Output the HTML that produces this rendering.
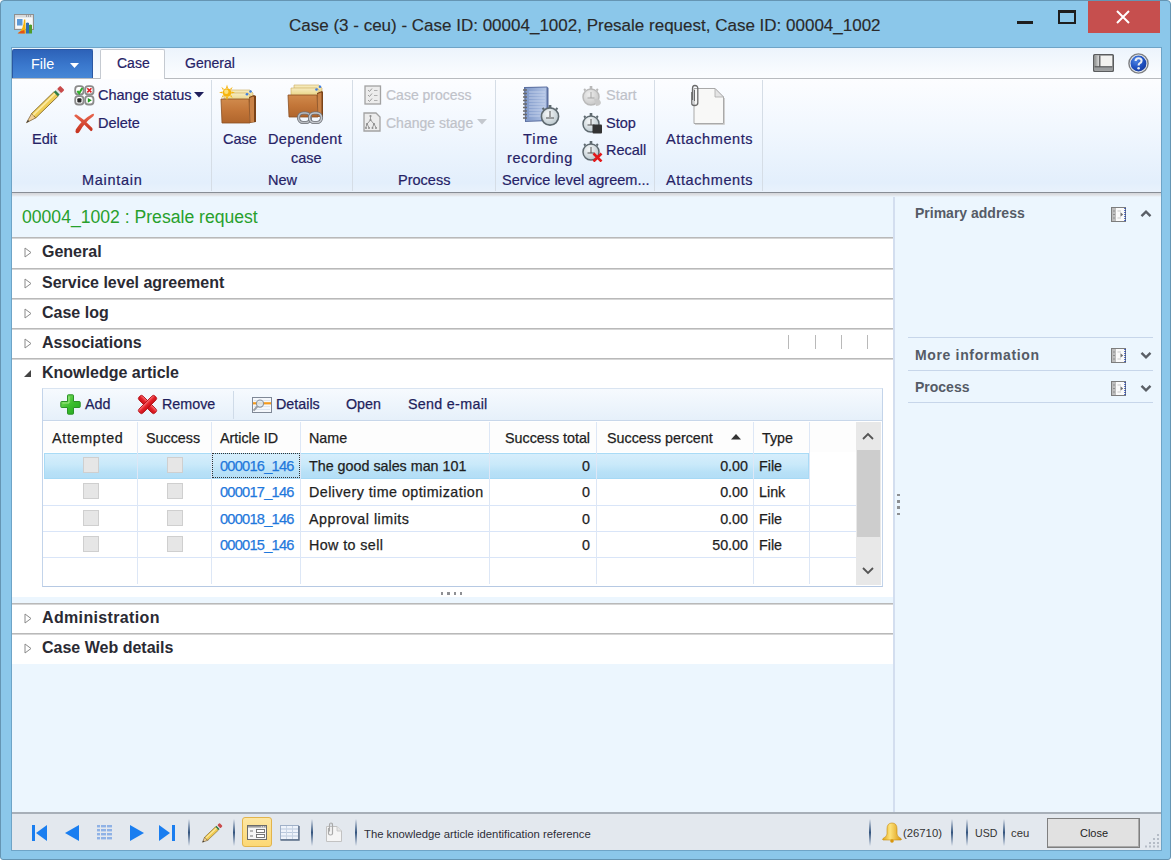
<!DOCTYPE html>
<html><head><meta charset="utf-8">
<style>
*{box-sizing:border-box;margin:0;padding:0}
html,body{width:1171px;height:860px;overflow:hidden;background:#fff}
body{font-family:"Liberation Sans",sans-serif;position:relative}
.a{position:absolute;white-space:nowrap}
#win{position:absolute;left:0;top:0;width:1171px;height:860px;background:#8bc7ea;border:1px solid #6595b3;border-radius:4px 4px 3px 3px}
.rib{position:absolute;white-space:nowrap;color:#262266;font-size:14.5px;line-height:17px;-webkit-text-stroke:.2px currentColor}
.dis{color:#bfc2c9}
.gl{position:absolute;top:80px;width:1px;height:111px;background:#d5dde6}
.sec{position:absolute;left:12px;width:881px;background:#fff;border-top:1px solid #b9b9b9;box-shadow:inset 0 1px #d6d6d6}
.sec .t{position:absolute;left:30px;top:4px;font-weight:bold;font-size:16px;line-height:19px;color:#2a2a33;white-space:nowrap}
.tri{position:absolute;left:12px;top:9px}
.gt{position:absolute;white-space:nowrap;font-size:14.3px;line-height:17px;color:#1e1e1e;-webkit-text-stroke:.25px currentColor}
.vl{position:absolute;top:422px;width:1px;height:162px;background:#dde7f6}
.hl{position:absolute;left:43px;width:813px;height:1px;background:#d9e5f8}
.cb{position:absolute;width:16px;height:16px;background:#e6e6e6;border:1px solid #cfcfcf}
.fb{position:absolute;white-space:nowrap;font-weight:bold;font-size:14px;line-height:17px;color:#555b66}
.sep{position:absolute;top:819px;width:2px;height:27px;background:linear-gradient(#e2e7ee,#34557f 50%,#e2e7ee)}
</style></head><body>
<div id="win"></div>
<!-- title bar -->
<svg class="a" style="left:14px;top:14px" width="20" height="20" viewBox="0 0 20 20">
 <rect x=".5" y=".5" width="19" height="15" fill="#d9dadb" stroke="#8f8f8f"/>
 <rect x="1.5" y="3.5" width="17" height="11" fill="#f7f8f9"/>
 <path d="M12 2 H13 M14 2 H15 M16 2 H17" stroke="#6d6f73"/>
 <rect x="3" y="5" width="5.5" height="6.5" fill="#5d9ad8"/>
 <path d="M4 19 Q9.5 16 10 5.5 L11.3 5.5 L11.8 19.5Z" fill="#f6b50e"/>
 <path d="M3.5 19.5 Q6 16.8 10.3 16 L10.8 19.5Z" fill="#e0531d"/>
 <path d="M12 19.5 V9 Q13.5 8 15 9 V19.5Z" fill="#2e6fb5"/>
 <path d="M15 19.5 V11 Q16.5 10 18 11 V19.5Z" fill="#4f9c2a"/>
</svg>
<div class="a" style="left:289px;top:16px;font-size:17px;line-height:20px;color:#2a2a2a;-webkit-text-stroke:.15px currentColor">Case (3 - ceu) - Case ID: 00004_1002, Presale request, Case ID: 00004_1002</div>
<div class="a" style="left:1017px;top:21px;width:16px;height:3px;background:#1e1e1e"></div>
<div class="a" style="left:1058px;top:10px;width:18px;height:14px;border:2px solid #1e1e1e;border-top-width:3px"></div>
<div class="a" style="left:1088px;top:1px;width:72px;height:32px;background:#c64f4e"></div>
<svg class="a" style="left:1115px;top:10px" width="16" height="14" viewBox="0 0 16 14"><path d="M2 1 L14 13 M14 1 L2 13" stroke="#fff" stroke-width="2"/></svg>

<!-- client -->
<div class="a" style="left:12px;top:48px;width:1149px;height:802px;background:#ecf6fe"></div>
<!-- tab row -->
<div class="a" style="left:11px;top:47px;width:1151px;height:804px;border:1px solid #6ea4c7"></div>
<div class="a" style="left:12px;top:48px;width:1149px;height:31px;background:linear-gradient(#ecf4fc,#fbfdff);border-bottom:1px solid #b8bbbf"></div>
<div class="a" style="left:12px;top:49px;width:81px;height:29px;background:linear-gradient(#2d62b8,#3a78cd 55%,#4787d6);border:1px solid #2a58a3;border-bottom:none;border-radius:2px 2px 0 0"></div>
<div class="a" style="left:31px;top:55.5px;font-size:14.4px;line-height:17px;color:#fff">File</div>
<svg class="a" style="left:69.5px;top:63px" width="9" height="6"><path d="M0 0 L9 0 L4.5 5Z" fill="#fff"/></svg>
<div class="a" style="left:100px;top:49px;width:65px;height:31px;background:#fff;border:1px solid #c5cad1;border-bottom:none;border-radius:2px 2px 0 0"></div>
<div class="rib" style="left:117px;top:55px;font-size:14px">Case</div>
<div class="rib" style="left:185px;top:55px;font-size:14px">General</div>
<!-- top-right icons -->
<svg class="a" style="left:1093px;top:54px" width="21" height="18" viewBox="0 0 21 18">
 <defs><linearGradient id="lc" x1="0" y1="0" x2="1" y2="0"><stop offset="0" stop-color="#8e9190"/><stop offset="1" stop-color="#dcdcdc"/></linearGradient></defs>
 <rect x=".8" y=".8" width="19.4" height="16.4" rx=".8" fill="#f2f2f0" stroke="#5a5c5e" stroke-width="1.6"/>
 <rect x="1.6" y="1.6" width="4.6" height="11.5" fill="url(#lc)"/>
 <path d="M6.8 1.6 V13" stroke="#4a4c4e" stroke-width="1.2"/>
 <rect x="1.6" y="12.6" width="17.8" height="4" fill="#9a9d9f"/>
 <path d="M1.6 12.8 H19.4" stroke="#4a4c4e" stroke-width="1"/>
</svg>
<svg class="a" style="left:1128px;top:53px" width="21" height="21" viewBox="0 0 21 21">
 <defs><radialGradient id="hq" cx=".35" cy=".3" r=".8"><stop offset="0" stop-color="#4f86e6"/><stop offset=".6" stop-color="#1d4fbf"/><stop offset="1" stop-color="#17399a"/></radialGradient></defs>
 <circle cx="10.5" cy="10.5" r="9.6" fill="#e8ecf0" stroke="#7d7f82" stroke-width="1.4"/>
 <circle cx="10.5" cy="10.5" r="7.9" fill="url(#hq)"/>
 <path d="M7.6 8 Q7.6 5.2 10.6 5.2 Q13.6 5.2 13.6 7.8 Q13.6 9.5 11.6 10.4 Q10.6 11 10.6 12.6" stroke="#e9edf3" stroke-width="2.1" fill="none"/>
 <circle cx="10.6" cy="15.3" r="1.3" fill="#e9edf3"/>
</svg>

<!-- ribbon body -->
<div class="a" style="left:12px;top:79px;width:1149px;height:114px;background:linear-gradient(#fcfdff,#f1f7fe 45%,#e3effc 92%,#e9f2fc);border-bottom:1px solid #878d95"></div>
<div class="a" style="left:12px;top:193px;width:1149px;height:4px;background:linear-gradient(#d3d5d9,#dfe1e5 50%,#ecf6fe)"></div>
<div class="gl" style="left:211px"></div>
<div class="gl" style="left:352px"></div>
<div class="gl" style="left:495px"></div>
<div class="gl" style="left:654px"></div>
<div class="gl" style="left:762px"></div>

<!-- Maintain -->
<svg class="a" style="left:24px;top:84px" width="42" height="42" viewBox="0 0 42 42">
 <g transform="translate(2.5,38.7) rotate(-44.2)">
  <path d="M0 0 L10 -3 L10 3Z" fill="#f1cf95" stroke="#7a5f36" stroke-width=".7"/>
  <path d="M0 0 L3 -.9 L3 .9Z" fill="#333"/>
  <rect x="10" y="-3" width="31" height="6" fill="#efcd55" stroke="#7d6428" stroke-width=".8"/>
  <rect x="10" y="-1.8" width="31" height="1.8" fill="#fbe9a0"/>
  <rect x="41" y="-3" width="2.5" height="6" fill="#2e7d44"/>
  <rect x="43.5" y="-3" width="2" height="6" fill="#e2e2e2"/>
  <rect x="45.5" y="-3" width="4.5" height="6" rx="1" fill="#c94b4b"/>
 </g>
</svg>
<div class="rib" style="left:32px;top:131px">Edit</div>
<svg class="a" style="left:74px;top:85px" width="21" height="21" viewBox="0 0 21 21">
 <g fill="#fff" stroke="#8b8b8b" stroke-width="1.8">
 <rect x="1.2" y="1.2" width="8.3" height="8.3" rx="3"/>
 <rect x="11.2" y="1.2" width="8.3" height="8.3" rx="3"/>
 <rect x="1.2" y="11.2" width="8.3" height="8.3" rx="3"/>
 <rect x="11.2" y="11.2" width="8.3" height="8.3" rx="3"/>
 </g>
 <path d="M3.3 6 L5.2 8.2 L8.3 3" stroke="#2fae2a" stroke-width="2" fill="none"/>
 <path d="M13.3 3.3 L17.4 7.4 M17.4 3.3 L13.3 7.4" stroke="#e01d22" stroke-width="1.6"/>
 <rect x="3.3" y="13.3" width="4.2" height="4.2" rx="1" fill="#2b2b2b"/>
 <path d="M13.8 13 L17.8 15.3 L13.8 17.8Z" fill="#1f9a1f"/>
</svg>
<div class="rib" style="left:98px;top:87px">Change status</div>
<svg class="a" style="left:194px;top:92px" width="10" height="6"><path d="M0 0 L10 0 L5 5.5Z" fill="#1f1f5c"/></svg>
<svg class="a" style="left:74px;top:113px" width="21" height="21" viewBox="0 0 21 21">
 <defs><linearGradient id="dx" x1="0" y1="0" x2="0" y2="1"><stop offset="0" stop-color="#e8664e"/><stop offset="1" stop-color="#c4301d"/></linearGradient></defs>
 <path d="M0.3 3 Q0.5 1 2.5 1.6 Q10.5 6.5 18.3 15 Q19.3 17.6 17 18.2 Q9.5 10.5 0.3 3Z" fill="url(#dx)"/>
 <path d="M19.6 0.8 Q20.8 1.8 19.3 3.2 Q10.5 9.5 6 18 Q4.8 20.6 2.6 20.2 Q0.8 19.2 1.8 16.6 Q7.5 7 17.8 1.2 Q18.8 0.5 19.6 0.8Z" fill="url(#dx)"/>
</svg>
<div class="rib" style="left:98px;top:115px">Delete</div>
<div class="rib" style="left:82px;top:172px;letter-spacing:.7px">Maintain</div>

<!-- New -->
<svg class="a" style="left:219px;top:84px" width="40" height="42" viewBox="0 0 40 42">
 <defs>
  <linearGradient id="fr" x1="0" y1="0" x2="0" y2="1"><stop offset="0" stop-color="#d08a4c"/><stop offset=".5" stop-color="#c27538"/><stop offset="1" stop-color="#b0652c"/></linearGradient>
  <linearGradient id="pp" x1="0" y1="0" x2="0" y2="1"><stop offset="0" stop-color="#f7ecc0"/><stop offset="1" stop-color="#e6cf7a"/></linearGradient>
 </defs>
 <path d="M8 6 L31 6 L34 9 L34 17 L8 17Z" fill="url(#pp)" stroke="#c9a85a" stroke-width=".6"/>
 <path d="M5 9 L29 9 L31 11 L31 18 L5 18Z" fill="url(#pp)" stroke="#c9a85a" stroke-width=".6"/>
 <circle cx="31.5" cy="7.5" r="1.3" fill="#3f7fe0"/>
 <circle cx="28" cy="10.3" r="1.3" fill="#3f7fe0"/>
 <path d="M30 13 L35 11 L37 12 L37 38 L31 39Z" fill="#7a4318"/>
 <path d="M30.5 14 L34 12.5 L35 13 L35 38 L31 38.5Z" fill="#c98247"/>
 <path d="M2 15 L30 15 L31 39 L3 39Z" fill="url(#fr)" stroke="#8a4f22" stroke-width=".8"/>
 <g fill="#f6b40e"><circle cx="8" cy="8.5" r="4.3"/>
 <path d="M8 0.5 L9 4 L7 4Z M8 16.5 L9 13 L7 13Z M0 8.5 L3.5 7.5 L3.5 9.5Z M16 8.5 L12.5 7.5 L12.5 9.5Z M2.3 2.8 L5 5 L3.9 6 Z M13.7 2.8 L11 5 L12.1 6Z M2.3 14.2 L5 12 L3.9 11Z M13.7 14.2 L11 12 L12.1 11Z"/></g>
 <circle cx="7.3" cy="7.8" r="2.2" fill="#fde07a"/>
</svg>
<div class="rib" style="left:223px;top:131px">Case</div>
<svg class="a" style="left:286px;top:82px" width="40" height="44" viewBox="0 0 40 44">
 <path d="M8 3 L33 3 L36 6 L36 14 L8 14Z" fill="url(#pp)" stroke="#c9a85a" stroke-width=".6"/>
 <path d="M5 6 L31 6 L33 8 L33 15 L5 15Z" fill="url(#pp)" stroke="#c9a85a" stroke-width=".6"/>
 <circle cx="34" cy="4.8" r="1.3" fill="#3f7fe0"/>
 <circle cx="30.5" cy="7.5" r="1.3" fill="#3f7fe0"/>
 <path d="M31 11 L36 9 L37 10 L37 35 L32 35Z" fill="#7a4318"/>
 <path d="M31.5 12 L35 10.5 L35.5 11 L35.5 34.5 L32 34.5Z" fill="#c98247"/>
 <path d="M2 13 L31 13 L32 35 L3 35Z" fill="url(#fr)" stroke="#8a4f22" stroke-width=".8"/>
 <rect x="12.5" y="31" width="12" height="9.5" rx="4.7" fill="none" stroke="#6f7278" stroke-width="3.2"/>
 <rect x="12.5" y="31" width="12" height="9.5" rx="4.7" fill="none" stroke="#b8bbc0" stroke-width="1.6"/>
 <rect x="23.5" y="31" width="12" height="9.5" rx="4.7" fill="none" stroke="#6f7278" stroke-width="3.2"/>
 <rect x="23.5" y="31" width="12" height="9.5" rx="4.7" fill="none" stroke="#c4c7cc" stroke-width="1.6"/>
</svg>
<div class="rib" style="left:268px;top:131px;letter-spacing:.35px">Dependent</div>
<div class="rib" style="left:291px;top:150px">case</div>
<div class="rib" style="left:268px;top:172px">New</div>

<!-- Process -->
<svg class="a" style="left:364px;top:85px" width="18" height="20" viewBox="0 0 18 20">
 <rect x="1" y="1" width="15.5" height="18" fill="#ececec" stroke="#a2a2a2" stroke-width="1.3"/>
 <path d="M4 5 L5.5 6.5 L8 3.5 M4 10 L5.5 11.5 L8 8.5 M4 15 L5.5 16.5 L8 13.5" stroke="#9c9c9c" stroke-width="1" fill="none"/>
 <path d="M10 5.5 H13.5 M10 10.5 H13.5 M10 15.5 H13.5" stroke="#b0b0b0" stroke-width="1.2"/>
</svg>
<div class="rib dis" style="left:386px;top:87px;font-size:14px">Case process</div>
<svg class="a" style="left:363px;top:112px" width="19" height="20" viewBox="0 0 19 20">
 <path d="M1 1 H13 L17 5 V19 H1Z" fill="#ececec" stroke="#a2a2a2" stroke-width="1.3"/>
 <path d="M7.5 4 V8 M7.5 8 L4 12 M7.5 8 L11 12 M4 12 L2.8 15.5 M4 12 L6 15.5 M11 12 L9.5 15.5 M11 12 L13 15.5" stroke="#8e8e8e" stroke-width=".9" fill="none"/>
 <g fill="#8e8e8e"><circle cx="7.5" cy="4" r="1.1"/><circle cx="7.5" cy="8" r="1.1"/><circle cx="4" cy="12" r="1.1"/><circle cx="11" cy="12" r="1.1"/><circle cx="3" cy="16" r="1"/><circle cx="6" cy="16" r="1"/><circle cx="9.5" cy="16" r="1"/><circle cx="13" cy="16" r="1"/></g>
</svg>
<div class="rib dis" style="left:386px;top:115px;font-size:14px">Change stage</div>
<svg class="a" style="left:477px;top:119px" width="10" height="6"><path d="M0 0 L10 0 L5 5.5Z" fill="#c4c8ce"/></svg>
<div class="rib" style="left:398px;top:172px">Process</div>

<!-- SLA -->
<svg class="a" style="left:520px;top:84px" width="42" height="44" viewBox="0 0 42 44">
 <defs><linearGradient id="nb" x1="0" y1="0" x2="1" y2="0"><stop offset="0" stop-color="#7f98c8"/><stop offset="1" stop-color="#b3c5e6"/></linearGradient>
 <radialGradient id="sw" cx=".4" cy=".35" r=".7"><stop offset="0" stop-color="#f6f8f9"/><stop offset="1" stop-color="#b9c6cc"/></radialGradient></defs>
 <path d="M4 3 L27 2.5 L28.5 4 L28.5 37 L5 38Z" fill="#5b6fa0"/>
 <path d="M5.5 4 L26.5 3.5 L26.5 36 L6 37Z" fill="url(#nb)"/>
 <path d="M9 8 H25 M9 11 H25 M9 14 H25 M9 17 H25 M9 20 H25 M9 23 H25 M9 26 H25 M9 29 H25 M9 32 H25" stroke="#d2ddf0" stroke-width=".7"/>
 <path d="M3 6 H7 M3 9.5 H7 M3 13 H7 M3 16.5 H7 M3 20 H7 M3 23.5 H7 M3 27 H7 M3 30.5 H7 M3 34 H7" stroke="#6b6b6b" stroke-width="1.4"/>
 <circle cx="30" cy="32.5" r="8.6" fill="url(#sw)" stroke="#5f6a70" stroke-width="1.6"/>
 <rect x="28.6" y="21" width="2.8" height="3" fill="#5f6a70"/>
 <path d="M22.5 25.5 L24 24 M37.5 25.5 L36 24" stroke="#5f6a70" stroke-width="2"/>
 <path d="M30 27 V33 M26 34 H34" stroke="#555" stroke-width="1"/>
</svg>
<div class="rib" style="left:523px;top:131px;letter-spacing:1px">Time</div>
<div class="rib" style="left:507px;top:150px;letter-spacing:.6px">recording</div>
<svg class="a" style="left:581px;top:85px" width="22" height="22" viewBox="0 0 22 22">
 <circle cx="10" cy="12" r="8" fill="url(#swg)" stroke="#b9b9b9" stroke-width="1.5"/>
 <rect x="8.7" y="1" width="2.6" height="3" fill="#b9b9b9"/>
 <path d="M3 5.5 L4.5 4 M17 5.5 L15.5 4" stroke="#b9b9b9" stroke-width="1.8"/>
 <path d="M10 7 V13 M6.5 13 H13.5" stroke="#a5a5a5" stroke-width="1"/>
 <defs><radialGradient id="swg" cx=".4" cy=".35" r=".7"><stop offset="0" stop-color="#eeeeee"/><stop offset="1" stop-color="#c6c6c6"/></radialGradient></defs><path d="M13 14 Q19 13 20 18 Q19 21 15 21Z" fill="#c9c9c9"/>
</svg>
<div class="rib dis" style="left:606px;top:87px">Start</div>
<svg class="a" style="left:581px;top:112px" width="22" height="22" viewBox="0 0 22 22">
 <circle cx="10" cy="12" r="8" fill="url(#sw)" stroke="#5f6a70" stroke-width="1.5"/>
 <rect x="8.7" y="1" width="2.6" height="3" fill="#5f6a70"/>
 <path d="M3 5.5 L4.5 4 M17 5.5 L15.5 4" stroke="#5f6a70" stroke-width="1.8"/>
 <path d="M10 7 V13 M6.5 13 H13.5" stroke="#555" stroke-width="1"/>
 <rect x="11.5" y="12.5" width="9.5" height="9" rx="1" fill="#333"/>
</svg>
<div class="rib" style="left:606px;top:115px">Stop</div>
<svg class="a" style="left:581px;top:140px" width="22" height="22" viewBox="0 0 22 22">
 <circle cx="10" cy="12" r="8" fill="url(#sw)" stroke="#5f6a70" stroke-width="1.5"/>
 <rect x="8.7" y="1" width="2.6" height="3" fill="#5f6a70"/>
 <path d="M3 5.5 L4.5 4 M17 5.5 L15.5 4" stroke="#5f6a70" stroke-width="1.8"/>
 <path d="M10 7 V13 M6.5 13 H13.5" stroke="#555" stroke-width="1"/>
 <path d="M12.5 13.5 L20.5 21.5 M20.5 13.5 L12.5 21.5" stroke="#e3191b" stroke-width="2.6"/>
</svg>
<div class="rib" style="left:606px;top:142px">Recall</div>
<div class="rib" style="left:502px;top:172px">Service level agreem...</div>

<!-- Attachments -->
<svg class="a" style="left:688px;top:84px" width="40" height="42" viewBox="0 0 40 42">
 <path d="M6 4.5 L27 4.5 L35.5 13 L35.5 39.5 L6 39.5Z" fill="#f8f8f7" stroke="#a9a9a9" stroke-width="1"/>
 <path d="M36.5 14 V40.5 H7" stroke="#d0d0d0" stroke-width="1" fill="none"/>
 <path d="M27 4.5 L27 13 L35.5 13Z" fill="#e4e4e4" stroke="#a9a9a9" stroke-width=".8"/>
 <path d="M3.8 8 V19.5 Q3.8 21.5 6.5 21.5 Q9.8 21.5 9.8 19 V4.5 Q9.8 1.5 6.8 1.5 Q4.5 1.5 4.5 4.5 V16" stroke="#6a6a6a" stroke-width="1.3" fill="none"/>
 <path d="M6.5 6 V17" stroke="#6a6a6a" stroke-width="1" fill="none"/>
</svg>
<div class="rib" style="left:666px;top:131px;letter-spacing:.6px">Attachments</div>
<div class="rib" style="left:666px;top:172px;letter-spacing:.6px">Attachments</div>

<!-- left content pane -->
<div class="a" style="left:22px;top:206.5px;font-size:17.6px;line-height:21px;color:#27a02c">00004_1002 : Presale request</div>

<div class="sec" style="top:237px;height:31px"><svg class="tri" width="8" height="11"><path d="M1 1 L7 5.5 L1 10Z" fill="#fff" stroke="#8a8a8a"/></svg><div class="t">General</div></div>
<div class="sec" style="top:268px;height:30px"><svg class="tri" width="8" height="11"><path d="M1 1 L7 5.5 L1 10Z" fill="#fff" stroke="#8a8a8a"/></svg><div class="t">Service level agreement</div></div>
<div class="sec" style="top:298px;height:30px"><svg class="tri" width="8" height="11"><path d="M1 1 L7 5.5 L1 10Z" fill="#fff" stroke="#8a8a8a"/></svg><div class="t">Case log</div></div>
<div class="sec" style="top:328px;height:30px"><svg class="tri" width="8" height="11"><path d="M1 1 L7 5.5 L1 10Z" fill="#fff" stroke="#8a8a8a"/></svg><div class="t">Associations</div>
 <div class="a" style="left:776px;top:6px;width:1px;height:14px;background:#b9b9b9"></div>
 <div class="a" style="left:803px;top:6px;width:1px;height:14px;background:#b9b9b9"></div>
 <div class="a" style="left:829px;top:6px;width:1px;height:14px;background:#b9b9b9"></div>
 <div class="a" style="left:855px;top:6px;width:1px;height:14px;background:#b9b9b9"></div>
</div>
<div class="sec" style="top:358px;height:239px"><svg class="tri" width="8" height="11" style="top:10px"><path d="M7 1 L7 8 L0 8Z" fill="#444"/></svg><div class="t">Knowledge article</div></div>
<div class="sec" style="top:603px;height:31px"><svg class="tri" width="8" height="11"><path d="M1 1 L7 5.5 L1 10Z" fill="#fff" stroke="#8a8a8a"/></svg><div class="t" style="letter-spacing:.35px">Administration</div></div>
<div class="sec" style="top:633px;height:31px"><svg class="tri" width="8" height="11"><path d="M1 1 L7 5.5 L1 10Z" fill="#fff" stroke="#8a8a8a"/></svg><div class="t">Case Web details</div></div>

<!-- grid -->
<div class="a" style="left:42px;top:388px;width:841px;height:199px;border:1px solid #c3d4ea;border-top-color:#d9e4f1;border-bottom-color:#b6c9e3;background:#fff"></div>
<div class="a" style="left:43px;top:389px;width:839px;height:32px;background:linear-gradient(#f6fafe,#e6f0fa);border-bottom:1px solid #c8d7ea"></div>
<div class="a" style="left:233px;top:391px;width:1px;height:28px;background:#cfdbe8"></div>
<svg class="a" style="left:60px;top:394px" width="21" height="21" viewBox="0 0 21 21">
 <defs><linearGradient id="ag" x1="0" y1="0" x2="1" y2="1"><stop offset="0" stop-color="#8fe26f"/><stop offset=".5" stop-color="#3cbf2e"/><stop offset="1" stop-color="#22a51f"/></linearGradient></defs>
 <path d="M7.5 1.5 Q7.5 .8 8.3 .8 H12.7 Q13.5 .8 13.5 1.5 V7.5 H19.5 Q20.2 7.5 20.2 8.3 V12.7 Q20.2 13.5 19.5 13.5 H13.5 V19.5 Q13.5 20.2 12.7 20.2 H8.3 Q7.5 20.2 7.5 19.5 V13.5 H1.5 Q.8 13.5 .8 12.7 V8.3 Q.8 7.5 1.5 7.5 H7.5Z" fill="url(#ag)" stroke="#2a9227" stroke-width="1"/>
 <path d="M9 2.5 V9 H2.5" stroke="#b5f09a" stroke-width="1" fill="none" opacity=".8"/>
</svg>
<div class="gt" style="left:85px;top:396px;color:#1f1f5c">Add</div>
<svg class="a" style="left:137px;top:394px" width="21" height="21" viewBox="0 0 21 21">
 <defs><linearGradient id="rg" x1="0" y1="0" x2="0" y2="1"><stop offset="0" stop-color="#f77a80"/><stop offset=".45" stop-color="#e8232b"/><stop offset="1" stop-color="#c70f17"/></linearGradient></defs>
 <g fill="url(#rg)" stroke="#b20f16" stroke-width=".9">
 <rect x="-.8" y="7.7" width="22.6" height="5.6" rx="2.3" transform="rotate(45 10.5 10.5)"/>
 <rect x="-.8" y="7.7" width="22.6" height="5.6" rx="2.3" transform="rotate(-45 10.5 10.5)"/>
 </g>
</svg>
<div class="gt" style="left:162px;top:396px;color:#1f1f5c">Remove</div>
<svg class="a" style="left:251px;top:396px" width="22" height="18" viewBox="0 0 22 18">
 <rect x="1.5" y="1.5" width="19" height="15" fill="#f4f7fb" stroke="#7f8896" stroke-width="1"/>
 <path d="M3 4.5 H19 M3 10.5 H19 M3 13.5 H19" stroke="#dde5ef" stroke-width="1"/>
 <path d="M2 7.3 H20" stroke="#f59a1c" stroke-width="2.2"/>
 <circle cx="9" cy="7.6" r="3.6" fill="#dbe9f5" fill-opacity=".85" stroke="#8d939a" stroke-width="1.1"/>
 <path d="M6.5 10.3 L2.5 14.6" stroke="#9a9fa6" stroke-width="2"/>
</svg>
<div class="gt" style="left:276px;top:396px;color:#1f1f5c">Details</div>
<div class="gt" style="left:346px;top:396px;color:#1f1f5c">Open</div>
<div class="gt" style="left:408px;top:396px;color:#1f1f5c;letter-spacing:.3px">Send e-mail</div>

<!-- header -->
<div class="a" style="left:43px;top:422px;width:813px;height:30px;background:#fdfdfd"></div>
<div class="gt" style="left:52px;top:430px;letter-spacing:.7px">Attempted</div>
<div class="gt" style="left:146px;top:430px">Success</div>
<div class="gt" style="left:220px;top:430px">Article ID</div>
<div class="gt" style="left:309px;top:430px">Name</div>
<div class="gt" style="left:505px;top:430px">Success total</div>
<div class="gt" style="left:607px;top:430px">Success percent</div>
<svg class="a" style="left:731px;top:434px" width="10" height="6"><path d="M0 5.5 L10 5.5 L5 0Z" fill="#333"/></svg>
<div class="gt" style="left:762px;top:430px">Type</div>
<!-- selected row -->
<div class="a" style="left:44px;top:453px;width:765px;height:26px;background:linear-gradient(#d6eefc,#c9e9fa 45%,#b8e1f7 75%,#b3def6);border:1px solid #a9dbf6;border-bottom-color:#a6d9f5"></div>
<div class="hl" style="top:505px"></div>
<div class="hl" style="top:531px"></div>
<div class="hl" style="top:557px"></div>
<div class="vl" style="left:137px"></div>
<div class="vl" style="left:211px"></div>
<div class="vl" style="left:300px"></div>
<div class="vl" style="left:489px"></div>
<div class="vl" style="left:596px"></div>
<div class="vl" style="left:753px"></div>
<div class="vl" style="left:809px"></div>
<div class="a" style="left:212px;top:453px;width:88px;height:25px;border:1px dotted #333"></div>
<!-- rows -->
<div class="cb" style="left:83px;top:457px"></div><div class="cb" style="left:167px;top:457px"></div>
<div class="cb" style="left:83px;top:483px"></div><div class="cb" style="left:167px;top:483px"></div>
<div class="cb" style="left:83px;top:510px"></div><div class="cb" style="left:167px;top:510px"></div>
<div class="cb" style="left:83px;top:536px"></div><div class="cb" style="left:167px;top:536px"></div>

<div class="gt" style="left:220px;top:457.5px;color:#1f78dc;font-size:14.6px;letter-spacing:-.75px">000016_146</div>
<div class="gt" style="left:220px;top:483.5px;color:#1f78dc;font-size:14.6px;letter-spacing:-.75px">000017_146</div>
<div class="gt" style="left:220px;top:510.5px;color:#1f78dc;font-size:14.6px;letter-spacing:-.75px">000018_146</div>
<div class="gt" style="left:220px;top:536.5px;color:#1f78dc;font-size:14.6px;letter-spacing:-.75px">000015_146</div>
<div class="gt" style="left:309px;top:457.5px">The good sales man 101</div>
<div class="gt" style="left:309px;top:483.5px;letter-spacing:.45px">Delivery time optimization</div>
<div class="gt" style="left:309px;top:510.5px;letter-spacing:.5px">Approval limits</div>
<div class="gt" style="left:309px;top:536.5px;letter-spacing:.4px">How to sell</div>
<div class="gt" style="left:490px;width:100px;text-align:right;top:457.5px">0</div>
<div class="gt" style="left:490px;width:100px;text-align:right;top:483.5px">0</div>
<div class="gt" style="left:490px;width:100px;text-align:right;top:510.5px">0</div>
<div class="gt" style="left:490px;width:100px;text-align:right;top:536.5px">0</div>
<div class="gt" style="left:600px;width:148px;text-align:right;top:457.5px">0.00</div>
<div class="gt" style="left:600px;width:148px;text-align:right;top:483.5px">0.00</div>
<div class="gt" style="left:600px;width:148px;text-align:right;top:510.5px">0.00</div>
<div class="gt" style="left:600px;width:148px;text-align:right;top:536.5px">50.00</div>
<div class="gt" style="left:759px;top:457.5px">File</div>
<div class="gt" style="left:759px;top:483.5px">Link</div>
<div class="gt" style="left:759px;top:510.5px">File</div>
<div class="gt" style="left:759px;top:536.5px">File</div>
<!-- scrollbar -->
<div class="a" style="left:856px;top:422px;width:25px;height:163px;background:#e8e8e8"></div>
<div class="a" style="left:857px;top:450px;width:23px;height:87px;background:#cdcdcd"></div>
<svg class="a" style="left:862px;top:432px" width="12" height="8"><path d="M1 7 L6 2 L11 7" stroke="#555" stroke-width="1.8" fill="none"/></svg>
<svg class="a" style="left:862px;top:567px" width="12" height="8"><path d="M1 1 L6 6 L11 1" stroke="#555" stroke-width="1.8" fill="none"/></svg>
<div class="a" style="left:440.8px;top:592.3px;width:23px;height:2.5px;background:repeating-linear-gradient(90deg,#8f9094 0 2.5px,transparent 2.5px 6.3px)"></div>

<!-- fact box pane -->
<div class="a" style="left:893px;top:197px;width:2px;height:615px;background:#d3deef"></div>
<div class="a" style="left:897px;top:493.5px;width:2.5px;height:21px;background:repeating-linear-gradient(#8d8f93 0 2.5px,transparent 2.5px 6.2px)"></div>
<div class="fb" style="left:915px;top:205px">Primary address</div>
<div class="fb" style="left:915px;top:347px;letter-spacing:.65px">More information</div>
<div class="fb" style="left:915px;top:379px">Process</div>
<div class="a" style="left:908px;top:337px;width:245px;height:1px;background:#c7d6ea"></div>
<div class="a" style="left:908px;top:370px;width:245px;height:1px;background:#c7d6ea"></div>
<div class="a" style="left:908px;top:402px;width:245px;height:1px;background:#c7d6ea"></div>
<svg class="a" style="left:1111px;top:207px" width="15" height="15" viewBox="0 0 15 15"><rect x=".5" y=".5" width="14" height="14" fill="#fafafa" stroke="#7d7d7d"/><rect x="1" y="1" width="4" height="13" fill="#bdbdbd"/><path d="M2 4 H4 M2 7.5 H4 M2 11 H4" stroke="#8e8e8e"/><path d="M6.5 4 H10 M6.5 11 H10" stroke="#c9c9c9"/><path d="M9.5 5.3 L12.2 7.5 L9.5 9.7Z" fill="#6f6f6f"/><path d="M14 1 V14" stroke="#1d3fae" stroke-width="1.4" stroke-dasharray="1 1"/></svg>
<svg class="a" style="left:1111px;top:348px" width="15" height="15" viewBox="0 0 15 15"><rect x=".5" y=".5" width="14" height="14" fill="#fafafa" stroke="#7d7d7d"/><rect x="1" y="1" width="4" height="13" fill="#bdbdbd"/><path d="M2 4 H4 M2 7.5 H4 M2 11 H4" stroke="#8e8e8e"/><path d="M6.5 4 H10 M6.5 11 H10" stroke="#c9c9c9"/><path d="M9.5 5.3 L12.2 7.5 L9.5 9.7Z" fill="#6f6f6f"/><path d="M14 1 V14" stroke="#1d3fae" stroke-width="1.4" stroke-dasharray="1 1"/></svg>
<svg class="a" style="left:1111px;top:381px" width="15" height="15" viewBox="0 0 15 15"><rect x=".5" y=".5" width="14" height="14" fill="#fafafa" stroke="#7d7d7d"/><rect x="1" y="1" width="4" height="13" fill="#bdbdbd"/><path d="M2 4 H4 M2 7.5 H4 M2 11 H4" stroke="#8e8e8e"/><path d="M6.5 4 H10 M6.5 11 H10" stroke="#c9c9c9"/><path d="M9.5 5.3 L12.2 7.5 L9.5 9.7Z" fill="#6f6f6f"/><path d="M14 1 V14" stroke="#1d3fae" stroke-width="1.4" stroke-dasharray="1 1"/></svg>
<svg class="a" style="left:1140px;top:209px" width="12" height="9"><path d="M1.5 7.2 L6 2.7 L10.5 7.2" stroke="#5a5f66" stroke-width="2.4" fill="none"/></svg>
<svg class="a" style="left:1140px;top:351px" width="12" height="9"><path d="M1.5 1.8 L6 6.3 L10.5 1.8" stroke="#5a5f66" stroke-width="2.4" fill="none"/></svg>
<svg class="a" style="left:1140px;top:384px" width="12" height="9"><path d="M1.5 1.8 L6 6.3 L10.5 1.8" stroke="#5a5f66" stroke-width="2.4" fill="none"/></svg>

<!-- status bar -->
<div class="a" style="left:12px;top:812px;width:1149px;height:38px;background:#e3e8ee;border-top:2px solid #a7afb8"></div>
<svg class="a" style="left:32px;top:825px" width="16" height="16" viewBox="0 0 16 16"><rect x="0" y="0" width="3" height="16" fill="#1a7ef0"/><path d="M15 0 L15 16 L4 8Z" fill="#1a7ef0"/></svg>
<svg class="a" style="left:64px;top:825px" width="16" height="16" viewBox="0 0 16 16"><path d="M15 0 L15 16 L1 8Z" fill="#1a7ef0"/></svg>
<svg class="a" style="left:97px;top:825px" width="15" height="15" viewBox="0 0 15 15"><rect x="0" y="0" width="3" height="2.4" fill="#8fb2e6"/><rect x="0" y="4" width="3" height="2.4" fill="#8fb2e6"/><rect x="0" y="8" width="3" height="2.4" fill="#8fb2e6"/><rect x="0" y="12" width="3" height="2.4" fill="#8fb2e6"/><rect x="4" y="0" width="5" height="2.4" fill="#8fb2e6"/><rect x="4" y="4" width="5" height="2.4" fill="#8fb2e6"/><rect x="4" y="8" width="5" height="2.4" fill="#8fb2e6"/><rect x="4" y="12" width="5" height="2.4" fill="#8fb2e6"/><rect x="10" y="0" width="5" height="2.4" fill="#8fb2e6"/><rect x="10" y="4" width="5" height="2.4" fill="#8fb2e6"/><rect x="10" y="8" width="5" height="2.4" fill="#8fb2e6"/><rect x="10" y="12" width="5" height="2.4" fill="#8fb2e6"/></svg>
<svg class="a" style="left:129px;top:825px" width="16" height="16" viewBox="0 0 16 16"><path d="M1 0 L1 16 L15 8Z" fill="#1a7ef0"/></svg>
<svg class="a" style="left:159px;top:825px" width="16" height="16" viewBox="0 0 16 16"><path d="M0 0 L0 16 L11 8Z" fill="#1a7ef0"/><rect x="13" y="0" width="3" height="16" fill="#1a7ef0"/></svg>
<div class="sep" style="left:188px"></div>
<svg class="a" style="left:201px;top:822px" width="22" height="22" viewBox="0 0 22 22">
 <g transform="translate(1.5,20.2) rotate(-43.5)">
  <path d="M0 0 L5 -2.2 L5 2.2Z" fill="#f1cf95" stroke="#6f5a36" stroke-width=".6"/>
  <path d="M0 0 L1.8 -.8 L1.8 .8Z" fill="#333"/>
  <rect x="5" y="-2.2" width="15" height="4.4" fill="#efc94f" stroke="#7d6428" stroke-width=".6"/>
  <rect x="5" y="-1.2" width="15" height="1.2" fill="#fbe9a0"/>
  <rect x="20" y="-2.2" width="1.6" height="4.4" fill="#2e7d44"/>
  <rect x="21.6" y="-2.2" width="1" height="4.4" fill="#ddd"/>
  <rect x="22.6" y="-2.2" width="3" height="4.4" rx=".8" fill="#c94b4b"/>
 </g>
</svg>
<div class="sep" style="left:233px"></div>
<div class="a" style="left:242px;top:817px;width:30px;height:30px;background:linear-gradient(#fde7a4,#fcd875);border:1px solid #e2b44c;border-radius:3px"></div>
<svg class="a" style="left:247px;top:825px" width="21" height="16" viewBox="0 0 21 16">
 <rect x=".5" y=".5" width="19" height="14" fill="#f6f6f6" stroke="#6b6b6b"/>
 <rect x="1" y="1" width="18" height="1.6" fill="#9a9a9a"/>
 <path d="M14 1.8 H15 M16 1.8 H17 M18 1.8 H18.6" stroke="#fff" stroke-width=".8"/>
 <path d="M3 6 H6 M3 11 H6" stroke="#777" stroke-width="1"/>
 <rect x="9.5" y="4.5" width="8" height="3" fill="#fff" stroke="#6b6b6b" stroke-width=".9"/>
 <rect x="9.5" y="9.5" width="8" height="3" fill="#fff" stroke="#6b6b6b" stroke-width=".9"/>
</svg>
<svg class="a" style="left:280px;top:825px" width="20" height="16" viewBox="0 0 20 16">
 <rect x=".5" y=".5" width="18" height="14" fill="#eef3fb" stroke="#9fb0c8"/>
 <path d="M1 4 H18 M1 7.5 H18 M1 11 H18" stroke="#b9c8dd" stroke-width="1"/>
 <path d="M6.5 1 V14 M12.5 1 V14" stroke="#c8d4e4" stroke-width="1"/>
 <path d="M.5 15 H19 V1" stroke="#5a6c86" stroke-width="1.4" fill="none"/>
</svg>
<div class="sep" style="left:311px"></div>
<svg class="a" style="left:325px;top:822px" width="18" height="21" viewBox="0 0 18 21">
 <path d="M1.5 4.5 L12 4.5 L16.5 9 L16.5 19.5 L1.5 19.5Z" fill="#f5f5f5" stroke="#c2c2c2"/>
 <path d="M12 4.5 V9 H16.5" fill="#e6e6e6" stroke="#c2c2c2" stroke-width=".8"/>
 <path d="M3.5 6 V11.5 Q3.5 13 5.5 13 Q7.5 13 7.5 11.5 V3 Q7.5 1 5.8 1 Q4.5 1 4.5 3 V9.5" stroke="#a9a9a9" stroke-width="1.2" fill="none"/>
</svg>
<div class="sep" style="left:355px"></div>
<div class="a" style="left:364px;top:826.5px;font-size:11.3px;line-height:14px;color:#2e2e38">The knowledge article identification reference</div>
<div class="sep" style="left:869px"></div>
<svg class="a" style="left:881px;top:822px" width="22" height="21" viewBox="0 0 22 21">
 <defs><linearGradient id="bl" x1="0" y1="0" x2="1" y2="0"><stop offset="0" stop-color="#e0a413"/><stop offset=".4" stop-color="#fde27a"/><stop offset="1" stop-color="#d9960c"/></linearGradient></defs>
 <path d="M11 1 Q6 1 6 7 V12 Q6 14.5 2 16.5 Q1 17.5 2 18 H20 Q21 17.5 20 16.5 Q16 14.5 16 12 V7 Q16 1 11 1Z" fill="url(#bl)" stroke="#c98a08" stroke-width=".6"/>
 <circle cx="11" cy="19" r="1.8" fill="#d9960c"/>
</svg>
<div class="a" style="left:903px;top:826px;font-size:11.3px;line-height:14px;color:#333">(26710)</div>
<div class="sep" style="left:951px"></div>
<div class="sep" style="left:966px"></div>
<div class="a" style="left:975px;top:826px;font-size:10.6px;line-height:14px;color:#333">USD</div>
<div class="sep" style="left:1003px"></div>
<div class="a" style="left:1011px;top:826px;font-size:11.3px;line-height:14px;color:#333">ceu</div>
<div class="a" style="left:1047px;top:818px;width:93px;height:30px;background:#e1e1e1;border:1px solid #7f7f7f;box-shadow:inset -1px -1px #a9a9a9"></div>
<div class="a" style="left:1048px;top:826px;width:92px;text-align:center;font-size:11px;line-height:14px;color:#1e1e1e">Close</div>
<svg class="a" style="left:1144px;top:833px" width="16" height="15"><rect x="13" y="1" width="2" height="2" fill="#b5bcc6"/><rect x="9" y="5" width="2" height="2" fill="#b5bcc6"/><rect x="13" y="5" width="2" height="2" fill="#b5bcc6"/><rect x="5" y="9" width="2" height="2" fill="#b5bcc6"/><rect x="9" y="9" width="2" height="2" fill="#b5bcc6"/><rect x="13" y="9" width="2" height="2" fill="#b5bcc6"/><rect x="1" y="12.5" width="2" height="2" fill="#b5bcc6"/><rect x="5" y="12.5" width="2" height="2" fill="#b5bcc6"/><rect x="9" y="12.5" width="2" height="2" fill="#b5bcc6"/><rect x="13" y="12.5" width="2" height="2" fill="#b5bcc6"/></svg>
</body></html>
